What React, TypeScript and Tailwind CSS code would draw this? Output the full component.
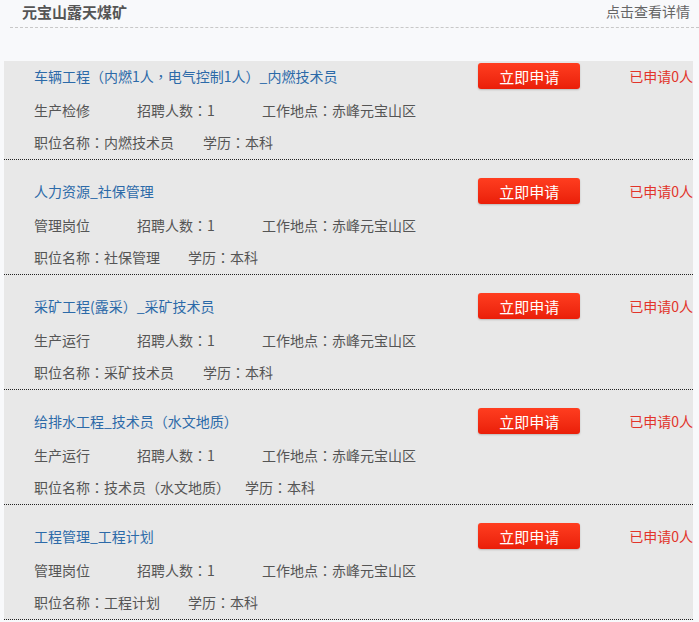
import React from "react";

interface Job {
  id: number;
  title: React.ReactNode;
  category: string;
  count: number;
  place: string;
  position: React.ReactNode;
  education: string;
  eduGap: string;
}

// centered full-width punctuation, like the reference font
const tc = { fontFamily: '"Noto Sans CJK TC", sans-serif' };
const P = ({ c }: { c: string }) => <span style={tc}>{c}</span>;

const jobs: Job[] = [
  {
    id: 1,
    title: (
      <>
        车辆工程<P c="（" />内燃1人<P c="，" />电气控制1人<P c="）" />_内燃技术员
      </>
    ),
    category: "生产检修",
    count: 1,
    place: "赤峰元宝山区",
    position: "内燃技术员",
    education: "本科",
    eduGap: "ml-[29px]",
  },
  {
    id: 2,
    title: "人力资源_社保管理",
    category: "管理岗位",
    count: 1,
    place: "赤峰元宝山区",
    position: "社保管理",
    education: "本科",
    eduGap: "ml-[28px]",
  },
  {
    id: 3,
    title: (
      <>
        采矿工程(露采<P c="）" />_采矿技术员
      </>
    ),
    category: "生产运行",
    count: 1,
    place: "赤峰元宝山区",
    position: "采矿技术员",
    education: "本科",
    eduGap: "ml-[29px]",
  },
  {
    id: 4,
    title: (
      <>
        给排水工程_技术员<P c="（" />水文地质<P c="）" />
      </>
    ),
    category: "生产运行",
    count: 1,
    place: "赤峰元宝山区",
    position: (
      <>
        技术员<P c="（" />水文地质<P c="）" />
      </>
    ),
    education: "本科",
    eduGap: "ml-[15px]",
  },
  {
    id: 5,
    title: "工程管理_工程计划",
    category: "管理岗位",
    count: 1,
    place: "赤峰元宝山区",
    position: "工程计划",
    education: "本科",
    eduGap: "ml-[28px]",
  },
];

export default function App() {
  return (
    <div
      className="w-[699px] h-[622px] overflow-hidden bg-[#f8f9fb] text-[14px] text-[#555]"
      style={{ fontFamily: '"Noto Sans CJK SC", "Noto Sans", sans-serif' }}
    >
      {/* Header */}
      <div className="ml-[10px] pb-[5px] border-b border-dashed border-[#c8c8c8]">
        <div className="h-[22px] flex items-center justify-between pl-[12px] pr-[9px]">
          <h2 className="text-[15px] font-bold text-[#555] leading-none">元宝山露天煤矿</h2>
          <span className="text-[14px] text-[#666] leading-none">点击查看详情</span>
        </div>
      </div>

      {/* Job list */}
      <div className="mt-[33px] ml-[4px] w-[689px] bg-[#e8e8e8] overflow-hidden">
        {jobs.map((job, i) => (
          <div
            key={job.id}
            className={`pl-[30px] pb-[7px] border-b border-dotted border-[#222] ${
              i === 0 ? "pt-[2px]" : "pt-[18px]"
            }`}
          >
            <div className="h-[26px] flex items-center whitespace-nowrap">
              <span className="w-[445px] text-[#2c6aa8] leading-none">{job.title}</span>
              <button className="w-[102px] h-[26px] rounded-[3px] bg-gradient-to-b from-[#ff3d1f] to-[#ea1e08] text-white text-[15px] leading-none shadow-[0_1px_2px_rgba(0,0,0,0.2)]">
                立即申请
              </button>
              <span className="ml-[49px] text-[#e2342a] leading-none">已申请0人</span>
            </div>
            <div className="mt-[11px] h-[20px] flex items-center whitespace-nowrap">
              <span className="w-[103px]">{job.category}</span>
              <span className="w-[125px]">
                招聘人数<P c="：" />
                {job.count}
              </span>
              <span>
                工作地点<P c="：" />
                {job.place}
              </span>
            </div>
            <div className="mt-[12px] h-[20px] flex items-center whitespace-nowrap">
              <span>
                职位名称<P c="：" />
                {job.position}
              </span>
              <span className={job.eduGap}>
                学历<P c="：" />
                {job.education}
              </span>
            </div>
          </div>
        ))}
      </div>
    </div>
  );
}
